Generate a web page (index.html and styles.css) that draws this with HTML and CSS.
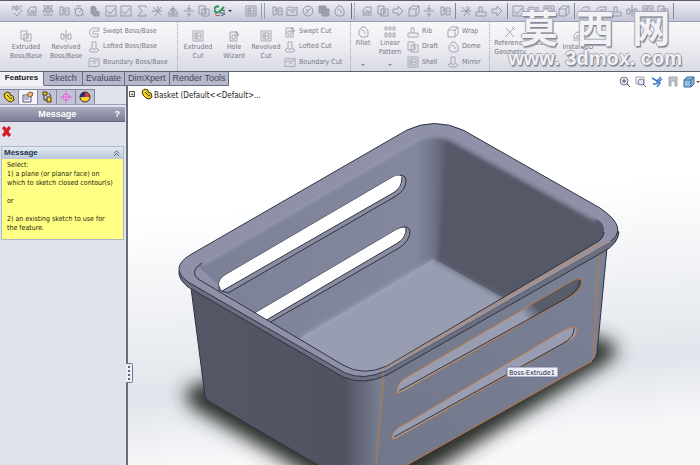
FILE: index.html
```
<!DOCTYPE html>
<html lang="en">

<head>
    <meta charset="UTF-8" />
    <meta name="viewport" content="width=device-width, initial-scale=1.0" />
    <title>Basket</title>
    <link rel="stylesheet" href="styles.css">
</head>

<body>
    <!-- shared icon shapes -->
    <svg class="defs" width="0" height="0" aria-hidden="true">
        <symbol id="i-spell" viewBox="0 0 12 12"><path d="M1 5l1-4h1l1 4M5 1h2v4H5zM9 1h2M8 3h2M3 8l3 3 5-6" /></symbol>
        <symbol id="i-measure" viewBox="0 0 12 12"><path d="M2 8V5l3-3h5v6zM1 10h10M4 6h4v2" class="f" /></symbol>
        <symbol id="i-scale" viewBox="0 0 12 12"><path d="M6 1v9M2 3h8M1 7l2-4 2 4zM7 7l2-4 2 4zM1 10h10M1 1h10" /></symbol>
        <symbol id="i-section" viewBox="0 0 12 12"><path d="M2 2h3v8H2zM7 3h4v7H7zM4 5h3M8 6h2" /></symbol>
        <symbol id="i-gauge" viewBox="0 0 12 12"><circle cx="6" cy="7" r="4" /><path d="M6 7l3-3M3 1h5M1 4l2 1M9 9l2 1" /></symbol>
        <symbol id="i-part" viewBox="0 0 12 12"><path d="M2 2l3-1 2 2v3l3 1v4H5L2 8z" class="d" /></symbol>
        <symbol id="i-check" viewBox="0 0 12 12"><path d="M1 1h10v10H1zM3 6l2 3 5-6" /></symbol>
        <symbol id="i-sigma" viewBox="0 0 12 12"><path d="M10 3V1H2l4 5-4 5h8V9" /></symbol>
        <symbol id="i-star" viewBox="0 0 12 12"><path d="M2 2l8 8M10 2l-6 9M1 6h6M7 1v5h4" /></symbol>
        <symbol id="i-draft" viewBox="0 0 12 12"><path d="M6 1v10M1 9l4-6v6zM7 9V3l4 6zM1 11h10" class="f" /></symbol>
        <symbol id="i-align" viewBox="0 0 12 12"><path d="M6 0v4M4 3l2 2 2-2M1 6h10M6 12V8M4 10l2-2 2 2" /></symbol>
        <symbol id="i-copy" viewBox="0 0 12 12"><path d="M1 1h6v8H1zM4 4h7v7H4zM6 6h3M6 8h3" class="f" /></symbol>
        <symbol id="i-box" viewBox="0 0 12 12"><path d="M1 4l3-3h7v7l-3 3H1zM1 4h7v7M8 4l3-3" class="f" /></symbol>
        <symbol id="i-rev" viewBox="0 0 12 12"><path d="M6 0v12M1 4h3v5H1zM8 4h3v5H8zM4 6h4" /></symbol>
        <symbol id="i-sweep" viewBox="0 0 12 12"><path d="M11 2H6a4 4 0 0 0 0 9h4V8H6a1 1 0 0 1 0-3h5z" class="f" /></symbol>
        <symbol id="i-loft" viewBox="0 0 12 12"><path d="M4 1h4v6l3 2-2 2H3L1 9l3-2zM4 8h4" class="f" /></symbol>
        <symbol id="i-bound" viewBox="0 0 12 12"><path d="M1 3c3-3 7 2 10-1v8c-3 2-7-1-10 1zM2 5h8M5 7h3" class="f" /></symbol>
        <symbol id="i-cut" viewBox="0 0 12 12"><path d="M1 1h10v10H1zM3 3h6v6H3zM5 3v6M3 6h6" class="f" /></symbol>
        <symbol id="i-hole" viewBox="0 0 12 12"><path d="M2 2h7v9H2zM4 5h3v4H4zM8 1l3 4-3 1z" class="f" /></symbol>
        <symbol id="i-fillet" viewBox="0 0 12 12"><path d="M2 5l3-4h3l3 4v5l-3 1H4L2 8zM4 5c2-2 4 0 4 3" class="f" /></symbol>
        <symbol id="i-pattern" viewBox="0 0 12 12"><path d="M1 1h2v3H1zM5 1h2v3H5zM9 1h2v3H9zM1 7h2v4H1zM5 7h2v4H5zM9 7h2v4H9z" /></symbol>
        <symbol id="i-rib" viewBox="0 0 12 12"><path d="M1 7h3V2h3v5h4v4H1zM4 7h3" class="f" /></symbol>
        <symbol id="i-arrow" viewBox="0 0 12 12"><path d="M1 4h5V1l5 5-5 5V8H1z" class="f" /></symbol>
        <symbol id="i-none" viewBox="0 0 12 12"><circle cx="6" cy="6" r="5" /><path d="M3 9l6-6M4 4l2 2" /></symbol>
        <symbol id="i-stack" viewBox="0 0 12 12"><path d="M1 1h7v7H1zM4 4h7v7H4z" class="d" /></symbol>
        <symbol id="i-ref" viewBox="0 0 12 12"><path d="M1 11L11 1M2 2l8 9M8 1l3 3" /></symbol>
        <symbol id="i-yellow" viewBox="0 0 12 12"><path d="M1 3l3-2 3 1v2l3 1 1 4-3 2-3-1L2 7z" fill="#f0cf2a" stroke="#4a3a08" /><path d="M4 4l3 3M7 8l2-1" stroke="#4a3a08" fill="none" /></symbol>
    </svg>

    <div class="app">
        <div class="quickbar" role="toolbar" aria-label="Tools">
            <div class="tools n16">
                <button aria-label="Spelling"><svg><use href="#i-spell" /></svg></button>
                <button aria-label="Measure"><svg><use href="#i-measure" /></svg></button>
                <button aria-label="Mass properties"><svg><use href="#i-scale" /></svg></button>
                <button aria-label="Section properties"><svg><use href="#i-section" /></svg></button>
                <button aria-label="Sensor"><svg><use href="#i-gauge" /></svg></button>
                <button aria-label="Statistics"><svg><use href="#i-part" /></svg></button>
                <button aria-label="Check"><svg><use href="#i-check" /></svg></button>
                <button aria-label="Design checker"><svg><use href="#i-check" /></svg></button>
                <button aria-label="Equations"><svg><use href="#i-sigma" /></svg></button>
                <button aria-label="Deviation analysis"><svg><use href="#i-star" /></svg></button>
                <button aria-label="Draft analysis"><svg><use href="#i-draft" /></svg></button>
                <button aria-label="Symmetry check"><svg><use href="#i-align" /></svg></button>
                <button aria-label="Compare"><svg><use href="#i-copy" /></svg></button>
                <button aria-label="Simulation"><svg viewBox="0 0 12 12"><path d="M5 2a3 3 0 1 0 0 5l5-5" stroke="#2f9a50" stroke-width="2" /><path d="M6 8h5M8 5l3 1M7 11l4-2" stroke="#39506a" /><path d="M1 9l2 2 3-1" stroke="#c03a3a" /></svg></button>
                <button class="drop" aria-label="More"></button>
                <button aria-label="Design table"><svg><use href="#i-cut" /></svg></button>
            </div>
            <span class="sep double"></span>
            <div class="tools n5">
                <button aria-label="Curvature"><svg><use href="#i-section" /></svg></button>
                <button aria-label="Zebra"><svg><use href="#i-bound" /></svg></button>
                <button aria-label="Suppress"><svg><use href="#i-none" /></svg></button>
                <button aria-label="Layers"><svg><use href="#i-stack" /></svg></button>
                <button aria-label="Rebuild"><svg><use href="#i-fillet" /></svg></button>
            </div>
            <span class="sep wide"></span>
            <div class="tools n6">
                <button aria-label="Plane"><svg><use href="#i-measure" /></svg></button>
                <button aria-label="Copy"><svg><use href="#i-copy" /></svg></button>
                <button aria-label="Move"><svg><use href="#i-arrow" /></svg></button>
                <button aria-label="Body"><svg><use href="#i-box" /></svg></button>
                <button aria-label="Rotate"><svg><use href="#i-align" /></svg></button>
                <button aria-label="Split"><svg><use href="#i-section" /></svg></button>
            </div>
            <span class="sep"></span>
            <div class="tools n3">
                <button aria-label="Sketch"><svg><use href="#i-star" /></svg></button>
                <button aria-label="Extend"><svg><use href="#i-rib" /></svg></button>
                <button aria-label="Trim"><svg><use href="#i-arrow" /></svg></button>
            </div>
            <span class="sep"></span>
            <div class="tools n4">
                <button aria-label="View"><svg><use href="#i-check" /></svg></button>
                <button aria-label="Surface"><svg><use href="#i-bound" /></svg></button>
                <button aria-label="Knit"><svg><use href="#i-cut" /></svg></button>
                <button aria-label="Thicken"><svg><use href="#i-box" /></svg></button>
            </div>
            <span class="sep"></span>
            <div class="tools n6">
                <button aria-label="Weld"><svg><use href="#i-measure" /></svg></button>
                <button aria-label="Join"><svg><use href="#i-sweep" /></svg></button>
                <button aria-label="Gusset"><svg><use href="#i-rib" /></svg></button>
                <button aria-label="Back"><svg><use href="#i-rev" /></svg></button>
                <button aria-label="Mold"><svg><use href="#i-cut" /></svg></button>
                <button aria-label="Core"><svg><use href="#i-copy" /></svg></button>
            </div>
            <span class="sep"></span>
        </div>

        <div class="ribbon" role="toolbar" aria-label="Features">
            <div class="group boss">
                <button class="big"><svg><use href="#i-copy" /></svg>Extruded<br>Boss/Base</button>
                <button class="big"><svg><use href="#i-rev" /></svg>Revolved<br>Boss/Base</button>
                <div class="stack">
                    <button><svg><use href="#i-sweep" /></svg>Swept Boss/Base</button>
                    <button><svg><use href="#i-loft" /></svg>Lofted Boss/Base</button>
                    <button><svg><use href="#i-bound" /></svg>Boundary Boss/Base</button>
                </div>
            </div>
            <div class="group cut">
                <button class="big"><svg><use href="#i-cut" /></svg>Extruded<br>Cut</button>
                <button class="big slim"><svg><use href="#i-hole" /></svg>Hole<br>Wizard</button>
                <button class="big slim"><svg><use href="#i-cut" /></svg>Revolved<br>Cut</button>
                <div class="stack">
                    <button><svg><use href="#i-hole" /></svg>Swept Cut</button>
                    <button><svg><use href="#i-loft" /></svg>Lofted Cut</button>
                    <button><svg><use href="#i-bound" /></svg>Boundary Cut</button>
                </div>
            </div>
            <div class="group shape">
                <button class="big high fillet more"><svg><use href="#i-fillet" /></svg>Fillet</button>
                <button class="big high pattern more"><svg><use href="#i-pattern" /></svg>Linear<br>Pattern</button>
                <div class="stack">
                    <button><svg><use href="#i-rib" /></svg>Rib</button>
                    <button><svg><use href="#i-copy" /></svg>Draft</button>
                    <button><svg><use href="#i-cut" /></svg>Shell</button>
                </div>
                <div class="stack">
                    <button><svg><use href="#i-box" /></svg>Wrap</button>
                    <button><svg><use href="#i-fillet" /></svg>Dome</button>
                    <button><svg><use href="#i-loft" /></svg>Mirror</button>
                </div>
            </div>
            <div class="group geometry">
                <button class="big high ref"><svg><use href="#i-ref" /></svg>Reference<br>Geometry</button>
                <button class="big high slim"><svg><use href="#i-sweep" /></svg>Curves</button>
                <button class="big slim"><svg><use href="#i-measure" /></svg>Instant3D</button>
            </div>
        </div>

        <div class="workspace">
            <nav class="tabs">
                <a href="#features" class="active">Features</a>
                <a href="#sketch">Sketch</a>
                <a href="#evaluate">Evaluate</a>
                <a href="#dimxpert">DimXpert</a>
                <a href="#render">Render Tools</a>
            </nav>

            <aside class="panel">
                <div class="panel-tabs">
                    <button aria-label="Feature tree"><svg><use href="#i-yellow" /></svg></button>
                    <button class="active" aria-label="Properties"><svg viewBox="0 0 12 12"><path d="M1 4h8v7H1z" fill="#f4f4fa" stroke="#55586a" /><path d="M2 6h5M2 8h5" stroke="#6a78b0" /><path d="M5 3l3-2 3 1-1 3-3 1z" fill="#f0b87a" stroke="#8a5a30" /></svg></button>
                    <button aria-label="Configurations"><svg viewBox="0 0 12 12"><path d="M2 1h4v3H2zM6 6h4v5H6z" fill="#f0cf2a" stroke="#4a3a08" /><path d="M3 4v5h3M8 2l2 3" stroke="#33353f" fill="none" /></svg></button>
                    <button aria-label="Dimensions"><svg viewBox="0 0 12 12"><circle cx="6" cy="6" r="3" fill="#f3b6f0" stroke="#d468d4" /><path d="M6 0v12M0 6h12" stroke="#d468d4" /></svg></button>
                    <button aria-label="Display"><svg viewBox="0 0 12 12"><circle cx="6" cy="6" r="5" fill="#e23a2e" /><path d="M6 6V1a5 5 0 0 0-5 5z" fill="#222c90" /><path d="M1 6a5 5 0 0 0 10 0z" fill="#f6d42c" /><circle cx="6" cy="6" r="5" fill="none" stroke="#40302c" /></svg></button>
                </div>
                <div class="panel-title">
                    <span>Message</span>
                    <button aria-label="Help">?</button>
                </div>
                <button class="close" aria-label="Cancel"><svg viewBox="0 0 10 10"><path d="M2 1l6 8M8 1L2 9" stroke="#d01c2a" stroke-width="3" /></svg></button>
                <section class="message">
                    <h2>Message <svg viewBox="0 0 8 8"><path d="M1 4l3-3 3 3M1 7l3-3 3 3" /></svg></h2>
                    <div class="message-text">
                        <p>Select:<br>1) a plane (or planar face) on<br>which to sketch closed contour(s)</p>
                        <p>or</p>
                        <p>2) an existing sketch to use for<br>the feature.</p>
                    </div>
                </section>
                <button class="splitter" aria-label="Resize panel"><i></i><i></i><i></i><i></i></button>
            </aside>

            <main class="view">
                <svg class="model" viewBox="128 86 572 379" preserveAspectRatio="xMinYMin slice">
                    <defs>
                        <linearGradient id="bg" x1="0" y1="0" x2="0.12" y2="1">
                            <stop offset="0.35" stop-color="#fff" />
                            <stop offset="0.82" stop-color="#e1e5eb" />
                            <stop offset="1" stop-color="#f8f8fa" />
                        </linearGradient>
                        <linearGradient id="wallBack" gradientUnits="userSpaceOnUse" x1="200" y1="0" x2="450" y2="0">
                            <stop offset="0" stop-color="#7d8197" />
                            <stop offset="0.86" stop-color="#84889e" />
                            <stop offset="0.92" stop-color="#74788c" />
                            <stop offset="1" stop-color="#565967" />
                        </linearGradient>
                        <linearGradient id="wallFront" gradientUnits="userSpaceOnUse" x1="190" y1="0" x2="384" y2="0">
                            <stop offset="0" stop-color="#545765" />
                            <stop offset="0.8" stop-color="#50535f" />
                            <stop offset="0.9" stop-color="#686c80" />
                            <stop offset="1" stop-color="#7e8399" />
                        </linearGradient>
                        <linearGradient id="wallRight" gradientUnits="userSpaceOnUse" x1="380" y1="460" x2="600" y2="260">
                            <stop offset="0" stop-color="#72778b" />
                            <stop offset="1" stop-color="#7b8195" />
                        </linearGradient>
                        <linearGradient id="slotFill" gradientUnits="userSpaceOnUse" x1="522" y1="314" x2="534" y2="304">
                            <stop offset="0" stop-color="#999db2" />
                            <stop offset="1" stop-color="#595c69" />
                        </linearGradient>
                        <linearGradient id="rimFront" gradientUnits="userSpaceOnUse" x1="375" y1="0" x2="400" y2="0">
                            <stop offset="0" stop-color="#8e91a8" />
                            <stop offset="1" stop-color="#9c9299" />
                        </linearGradient>
                        <filter id="shadow" x="-20%" y="-30%" width="140%" height="160%"><feGaussianBlur stdDeviation="9" /></filter>
                        <filter id="soft"><feGaussianBlur stdDeviation="2" /></filter>
                        <clipPath id="opening"><path d="M202 263L412 141Q432 129 453 139L597 219Q608 226 602 238Q600 241 594 244L387 366Q363 377 343 365L198 279Q189 272 202 263z" /></clipPath>
                    </defs>
                    <rect x="128" y="86" width="572" height="379" fill="url(#bg)" />
                    <path d="M184 390L210 380L600 336L618 348Q618 358 588 374L412 484H325L190 406z" fill="#2b2d2b" filter="url(#shadow)" />

                    <!-- outer walls -->
                    <path d="M191 288L205 396Q206 400 210 402L318 465H376L384 374z" fill="url(#wallFront)" />
                    <path d="M191 288L205 396Q206 400 210 402L318 465" class="edge" />
                    <path d="M384 374L375 465H407L592 361Q596 359 597 353L607 248z" fill="url(#wallRight)" />
                    <path d="M607 248L597 353Q596 359 592 361" class="edge" />
                    <path d="M384 378L376 465M407 465L592 361M599 252L593 359" class="hot" />

                    <!-- slots in the front wall -->
                    <path d="M397 393Q396 383 407 377L570 282Q580 276 582 281Q583 288 573 295L400 393z" fill="url(#slotFill)" class="hot" />
                    <path d="M399 391L565 299Q579 291 580 280" class="edge" />
                    <path d="M392 439Q391 430 405 424L562 331Q576 324 577 329Q577 337 568 341L395 439z" fill="#999db2" class="hot" />
                    <path d="M394 437L562 344Q575 337 574 328" class="edge" />

                    <!-- rim side and top -->
                    <path d="M179 271Q178 279 188 287L343 377Q364 386 387 375L603 252Q618 244 619 232L600 220L363 360L190 262z" fill="#6b6f82" class="edge" />
                    <path d="M190 255L407 130Q434 117 463 130L600 208Q631 229 608 243L385 371Q364 381 345 373L188 282Q169 268 190 255z" fill="#8e91a8" class="edge" />
                    <path d="M385 366L600 241L612 241L385 371z" fill="url(#rimFront)" />

                    <!-- inside -->
                    <g clip-path="url(#opening)">
                        <path d="M180 250L430 110L450 140V300L300 360z" fill="url(#wallBack)" />
                        <path d="M448 120L630 220V300L500 310L438 262z" fill="#555866" filter="url(#soft)" />
                        <path d="M434 259L520 307L380 400L280 350z" fill="#999db2" />
                        <path d="M302 337L434 259" stroke="#a7abc0" stroke-width="2" filter="url(#soft)" />
                        <path d="M434 259L520 307" stroke="#666a7b" stroke-width="3" filter="url(#soft)" />
                        <path d="M202 263L412 141Q432 129 453 139L597 219" stroke="#999cb2" stroke-width="5" filter="url(#soft)" fill="none" />
                        <path d="M219 284Q219 278 227 274L393 177Q405 172 406 180Q406 190 396 196L228 293L219 290z" fill="#8a8ea3" class="edge" />
                        <path d="M219 285Q219 278 227 274L393 177Q402 173 402 180Q402 188 393 193L222 291z" fill="#fff" />
                        <path d="M222 291L393 193Q402 188 402 177" class="edge" />
                        <path d="M250 316L396 230Q408 223 410 231Q410 241 399 248L262 327z" fill="#8a8ea3" class="edge" />
                        <path d="M250 316L396 230Q406 225 406 231Q406 239 396 244L258 325z" fill="#fdfdfd" />
                        <path d="M258 325L396 244Q407 238 406 228" class="edge" />
                    </g>
                    <path d="M202 263Q189 271 198 279L343 365Q363 377 387 366L594 244Q604 239 604 232" class="edge" />
                    <path d="M383 378V369L600 243" stroke="#c08a5c" opacity="0.6" fill="none" />

                    <rect x="507" y="367" width="51" height="10" fill="#eceefa" stroke="#777b96" />
                    <text x="509" y="375" class="tip">Boss-Extrude1</text>
                </svg>
                <div class="tree">
                    <button aria-label="Expand">+</button>
                    <svg><use href="#i-yellow" /></svg>
                    <span>Basket (Default&lt;&lt;Default&gt;...</span>
                </div>
            </main>

            <div class="view-tools">
                <button aria-label="Zoom to fit"><svg viewBox="0 0 12 12"><circle cx="5" cy="5" r="4" fill="#dfe8f4" stroke="#778" /><path d="M8 8l3 3M3 5h4M5 3v4" stroke="#556" /></svg></button>
                <button aria-label="Zoom to area"><svg viewBox="0 0 12 12"><path d="M1 1h8v7H1z" fill="none" stroke="#99a" /><circle cx="6" cy="6" r="3" fill="#dfe8f4" stroke="#778" /><path d="M8 8l3 3" stroke="#556" /></svg></button>
                <button aria-label="Previous view"><svg viewBox="0 0 12 12"><path d="M1 2l5 3 4-4M5 5l4 2-3 4M2 8h3l6-5" stroke="#3c78c0" fill="none" stroke-width="1.5" /></svg></button>
                <button aria-label="Section view"><svg viewBox="0 0 12 12"><path d="M2 1h8v9H8V5H4v5H2z" fill="#c3c5ce" stroke="#a3a5b0" /></svg></button>
                <button aria-label="View orientation"><svg viewBox="0 0 12 12"><path d="M1 4l3-3h7v7l-3 3H1z" fill="#8cc0e6" stroke="#3b648c" /><path d="M1 4h7v7M8 4l3-3" stroke="#3b648c" fill="none" /></svg></button>
                <span class="arrow"></span>
            </div>
        </div>

        <div class="watermark">
            <div class="watermark-name"><span>莫</span><span>西</span><span>网</span></div>
            <div class="watermark-site">www. 3dmox. com</div>
        </div>
    </div>
</body>

</html>
```
FILE: styles.css
```
body {
    margin: 0;
    font-family: "DejaVu Sans Condensed", "DejaVu Sans", sans-serif;
    font-size: 7px;
    line-height: 9px;
    color: #1c1c24;
}

button {
    border: none;
    padding: 0;
    margin: 0;
    background: none;
    font: inherit;
    color: inherit;
    cursor: pointer;
}

svg {
    width: 12px;
    height: 12px;
    flex: none;
}

.defs {
    position: absolute;
    width: 0;
    height: 0;
}

.app {
    position: relative;
    display: flex;
    flex-direction: column;
    height: 100vh;
    overflow: hidden;
}

/* top toolbar */
.quickbar {
    display: flex;
    align-items: center;
    height: 20px;
    padding: 0 24px 0 9px;
    border-top: 1px solid #5a5a68;
    border-bottom: 1px solid #9a9db2;
    background: linear-gradient(#eeeef5, #c5c7da);
}

.quickbar svg,
.ribbon svg {
    fill: none;
    stroke: #9699a6;
}

.ribbon svg {
    stroke: #a6a8b3;
}

.quickbar .f,
.ribbon .f {
    fill: #d4d5dd;
}

.d {
    fill: #9c9eaa;
}

.tools {
    display: flex;
    min-width: 0;
}

.tools button {
    display: flex;
    flex: 1;
    justify-content: center;
    min-width: 0;
}

.n16 {
    flex: 16;
}

.n6 {
    flex: 6;
}

.n5 {
    flex: 5;
}

.n4 {
    flex: 4;
}

.n3 {
    flex: 3;
}

.tools .drop {
    align-self: center;
    justify-content: flex-start;
}

.drop::before,
.arrow {
    content: "";
    border: 2px solid transparent;
    border-top-color: #333;
    border-bottom: none;
}

.sep {
    width: 1px;
    height: 16px;
    margin: 0 2px;
    background: #85889c;
}

.sep.double {
    width: 2px;
    margin: 0 4px 0 2px;
    border-left: 1px solid #9a9db0;
    border-right: 1px solid #9a9db0;
    background: none;
}

.sep.wide {
    width: 2px;
    margin: 0 4px;
    border-left: 1px solid #6c6f84;
    border-right: 1px dotted #85889c;
    background: none;
}

/* feature ribbon */
.ribbon {
    display: flex;
    height: 49px;
    border-bottom: 1px solid #5c5f6e;
    background: linear-gradient(#f8f8fa, #eeeef3 45%, #d9dae4);
    color: #767985;
}

.group {
    display: flex;
}

.group + .group {
    border-left: 1px dotted #a3a6b5;
}

.boss {
    width: 171px;
    padding-left: 6px;
}

.cut {
    width: 172px;
}

.shape {
    width: 138px;
}

.geometry {
    flex: 1;
}

.big {
    display: flex;
    flex-direction: column;
    align-items: center;
    width: 40px;
    padding-top: 8px;
    white-space: nowrap;
}

.big svg {
    margin-bottom: 1px;
}

.slim {
    width: 32px;
}

.high {
    padding-top: 4px;
}

.more {
    position: relative;
}

.more::after {
    content: "";
    position: absolute;
    bottom: 5px;
    border: 2px solid transparent;
    border-top-color: #85889a;
    border-bottom: none;
}

.fillet {
    width: 24px;
}

.pattern {
    width: 30px;
}

.ref {
    width: 40px;
}

.stack {
    display: grid;
    grid-template-rows: repeat(3, 1fr);
    padding: 2px 0 1px 2px;
    min-width: 38px;
}

.stack button {
    display: flex;
    align-items: center;
    gap: 3px;
    white-space: nowrap;
}

/* work area */
.workspace {
    position: relative;
    display: grid;
    grid-template: 14px 1fr / 128px 1fr;
    flex: 1;
    min-height: 0;
    background: #fff;
}

.tabs {
    display: flex;
    grid-column: 1 / 3;
    font-family: "Liberation Sans", sans-serif;
    font-size: 9px;
    line-height: 12px;
}

.tabs a {
    box-sizing: border-box;
    min-width: 39px;
    padding: 0 3px;
    border: 1px solid #6c6f84;
    border-top: none;
    border-left: none;
    background: #b6b8cc;
    color: #45475a;
    text-align: center;
    text-decoration: none;
    white-space: nowrap;
}

.tabs .active {
    min-width: 44px;
    border-bottom-color: #f2f2f6;
    background: #f2f2f6;
    color: #1a1a24;
    font-size: 8px;
    font-weight: bold;
}

.panel {
    position: relative;
    border-right: 2px solid #686b80;
    background: #e1e3ec;
}

.panel-tabs {
    display: flex;
    margin-top: 3px;
    border-bottom: 1px solid #9da0b3;
}

.panel-tabs button {
    display: flex;
    justify-content: center;
    width: 19px;
    padding: 1px 0;
    border-top: 1px solid #8588a0;
    border-right: 1px solid #8588a0;
    background: #c2c4d6;
}

.panel-tabs .active {
    background: #f4f4f8;
}

.panel-tabs svg {
    fill: none;
}

.panel-title {
    display: flex;
    margin: 2px 1px 0 0;
    padding: 0 5px 0 0;
    border-bottom: 1px solid #62657a;
    background: linear-gradient(#a9acbd, #7c7f95);
    color: #fff;
    font: bold 9px/14px "Liberation Sans", sans-serif;
    text-align: center;
}

.panel-title span {
    flex: 1;
}

.close {
    display: block;
    margin: 4px 0 0 1px;
}

.close svg {
    display: block;
    width: 11px;
    height: 11px;
}

.message {
    margin: 9px 2px 0 1px;
    border: 1px solid #b0b8c8;
}

.message h2 {
    display: flex;
    justify-content: space-between;
    align-items: center;
    margin: 0;
    padding: 0 3px 0 2px;
    background: linear-gradient(#e4eaf2, #b9c6d8);
    color: #24344e;
    font: bold 8px/12px "Liberation Sans", sans-serif;
}

.message h2 svg {
    width: 7px;
    height: 7px;
    fill: none;
    stroke: #44546c;
}

.message-text {
    padding: 2px 0 6px 5px;
    background: #ffff84;
    color: #26260c;
    white-space: nowrap;
}

.message-text p {
    margin: 0 0 9px;
}

.message-text p:last-child {
    margin-bottom: 0;
}

.splitter {
    position: absolute;
    top: 277px;
    right: -7px;
    z-index: 1;
    display: flex;
    flex-direction: column;
    justify-content: space-evenly;
    align-items: center;
    width: 7px;
    height: 20px;
    border: 1px solid #74778c;
    border-left: none;
    border-radius: 0 2px 2px 0;
    background: #eceef4;
}

.splitter i {
    width: 2px;
    height: 2px;
    background: #5c6486;
}

.view {
    position: relative;
    min-width: 0;
    min-height: 0;
    overflow: hidden;
}

.model {
    display: block;
    width: 100%;
    height: 100%;
}

.edge {
    stroke: #30333f;
}

path.edge:not([fill]),
path.hot:not([fill]) {
    fill: none;
}

.hot {
    stroke: #bd7a45;
}

.tip {
    font-size: 7px;
    fill: #22243a;
}

.tree {
    position: absolute;
    top: 1px;
    left: 1px;
    display: flex;
    align-items: center;
    font-size: 8px;
}

.tree button {
    width: 6px;
    height: 6px;
    border: 1px solid #555;
    box-sizing: border-box;
    font-size: 6px;
    line-height: 4px;
}

.tree svg {
    margin: 0 1px 0 6px;
}

.tree span {
    padding-top: 4px;
    white-space: nowrap;
}

.view-tools {
    position: absolute;
    top: 4px;
    right: 0;
    display: flex;
    align-items: center;
    gap: 4px;
}

.view-tools svg {
    display: block;
}

.view-tools .arrow {
    margin-left: -3px;
    border-top-color: #a04030;
}

/* site mark over the toolbars */
.watermark {
    position: absolute;
    top: 4px;
    right: 18px;
    color: #f1f1f6;
    text-shadow: 1px 1px 0 #858894, -1px 0 0 #a4a7b2, 0 -1px 0 #a4a7b2, 1px 2px 1px #9fa2ae;
    pointer-events: none;
}

.watermark-name {
    display: flex;
    justify-content: center;
    gap: 18px;
    font: bold 38px/43px "Noto Sans CJK SC", sans-serif;
}

.watermark-site {
    font: bold 20px/22px "Liberation Sans", sans-serif;
    white-space: nowrap;
}
```
